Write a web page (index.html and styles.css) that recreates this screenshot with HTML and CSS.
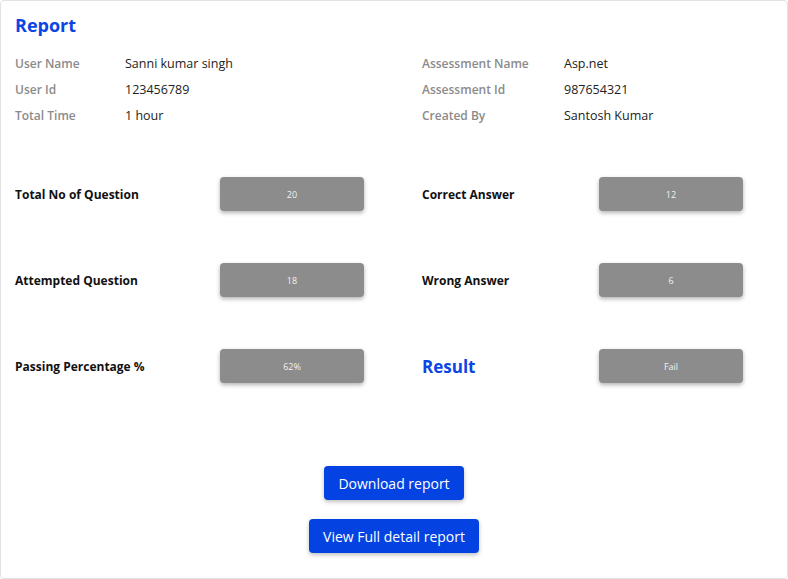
FILE: index.html
```html
<!DOCTYPE html>
<html lang="en">
<head>
<meta charset="utf-8">
<title>Report</title>
<link rel="stylesheet" href="styles.css">
</head>
<body>
<div class="card">
  <h1 class="title">Report</h1>
  <div class="info">
    <div class="info-col left">
      <span class="k">User Name</span><span class="v">Sanni kumar singh</span>
      <span class="k">User Id</span><span class="v">123456789</span>
      <span class="k">Total Time</span><span class="v">1 hour</span>
    </div>
    <div class="info-col right">
      <span class="k">Assessment Name</span><span class="v">Asp.net</span>
      <span class="k">Assessment Id</span><span class="v">987654321</span>
      <span class="k">Created By</span><span class="v">Santosh Kumar</span>
    </div>
  </div>
  <div class="stats">
    <div class="stat-col left">
      <span class="sl">Total No of Question</span><span class="box">20</span>
      <span class="sl">Attempted Question</span><span class="box">18</span>
      <span class="sl">Passing Percentage %</span><span class="box">62%</span>
    </div>
    <div class="stat-col right">
      <span class="sl">Correct Answer</span><span class="box">12</span>
      <span class="sl">Wrong Answer</span><span class="box">6</span>
      <span class="sl result">Result</span><span class="box">Fail</span>
    </div>
  </div>
  <div class="actions">
    <button class="btn">Download report</button>
    <button class="btn">View Full detail report</button>
  </div>
</div>
</body>
</html>
```
FILE: styles.css
```css
* { box-sizing: border-box; }
html, body { margin: 0; padding: 0; background: #fff; }
body { font-family: "Open Sans", "Liberation Sans", sans-serif; }
.card {
  width: 788px;
  height: 579px;
  border: 1px solid #e2e2e2;
  border-radius: 4px;
  padding: 13px 14px 0 14px;
}
.title {
  margin: 0;
  font-size: 18px;
  line-height: 22px;
  font-weight: 700;
  color: #0b45e4;
}
.info {
  display: grid;
  grid-template-columns: 407px 1fr;
  margin-top: 14px;
}
.info-col {
  display: grid;
  row-gap: 0;
  grid-auto-rows: 26px;
  align-items: center;
}
.info-col.left { grid-template-columns: 110px 1fr; }
.info-col.right { grid-template-columns: 142px 1fr; }
.k { font-size: 12px; font-weight: 600; color: #8b8b8b; }
.v { font-size: 12.5px; color: #222; }
.stats {
  display: grid;
  grid-template-columns: 407px 1fr;
  margin-top: 49px;
}
.stat-col {
  display: grid;
  grid-auto-rows: 34px;
  row-gap: 52px;
  align-items: center;
}
.stat-col.left { grid-template-columns: 205px 144px; }
.stat-col.right { grid-template-columns: 177px 144px; }
.sl { font-size: 12px; font-weight: 700; color: #111; }
.sl.result { font-size: 17px; color: #0b45e4; }
.box {
  height: 34px;
  background: #8c8c8c;
  border-radius: 4px;
  box-shadow: 0 2px 4px rgba(0,0,0,0.3);
  color: #f2f2f2;
  font-size: 9px;
  display: flex;
  align-items: center;
  justify-content: center;
}
.actions {
  margin-top: 83px;
  display: flex;
  flex-direction: column;
  align-items: center;
  gap: 19px;
}
.btn {
  height: 34px;
  border: none;
  border-radius: 4px;
  background: #0443e2;
  color: #fff;
  font-family: inherit;
  font-size: 14px;
  padding: 0 14px;
  box-shadow: 0 2px 4px rgba(0,0,0,0.25);
}
```
